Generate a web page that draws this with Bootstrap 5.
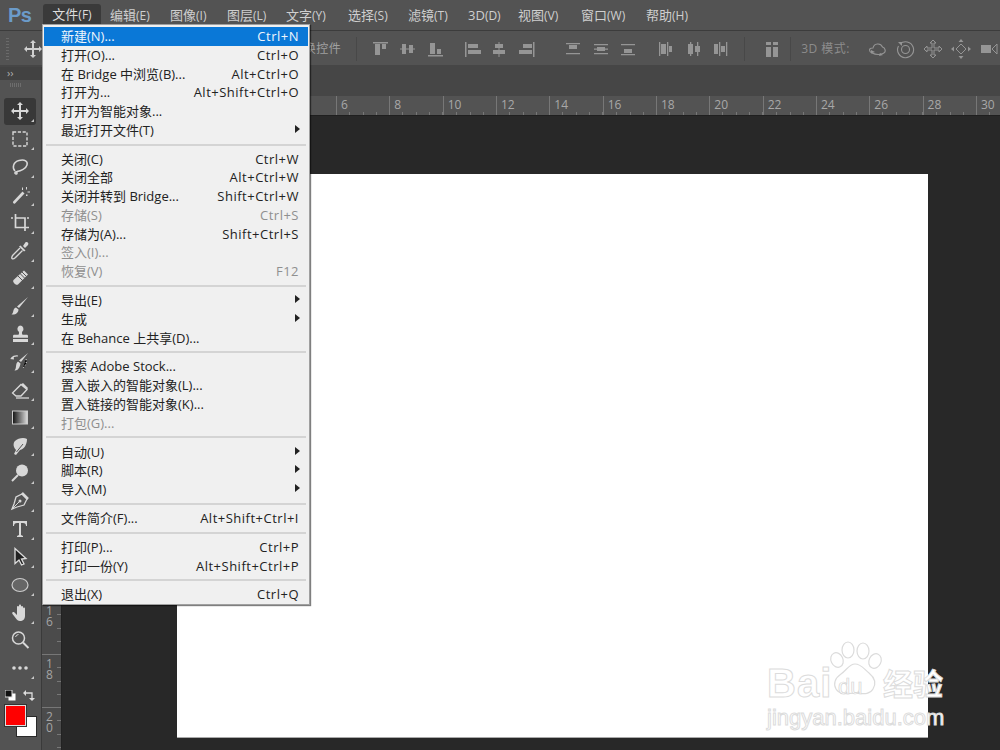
<!DOCTYPE html>
<html lang="zh-CN">
<head>
<meta charset="utf-8">
<title>Photoshop</title>
<link href="https://cdn.jsdelivr.net/npm/bootstrap@5.3.0/dist/css/bootstrap.min.css" rel="stylesheet">
<script src="https://cdn.jsdelivr.net/npm/bootstrap@5.3.0/dist/js/bootstrap.bundle.min.js"></script>
<style>
html,body{margin:0;height:100%;background:#282828;overflow:hidden}
body{font-family:"Open Sans","Noto Sans CJK SC",sans-serif;font-size:13px}
.app{width:1000px;height:750px;overflow:hidden;background:#282828}
.menubar{height:31px;background:#535353;border-bottom:1px solid #3c3c3c;color:#cfcfcf;font-size:13px;padding-left:8px;flex:none}
.logo{font:700 20px "Liberation Sans",sans-serif;color:#6b9bc9;width:35px;line-height:30px;letter-spacing:-.5px}
.mb{height:30px;line-height:30px;white-space:nowrap;width:60px;flex:none}
.mb small{font-size:12px}
.mb.on{background:#3a3a3a;border-radius:3px 3px 0 0;margin:4px 9px 0 0;height:21px;line-height:21px;width:58px;text-align:center;color:#ddd}
.optbar{height:36px;background:#535353;border-bottom:2px solid #464646;color:#a0a0a0;padding-top:2px;flex:none}
.optbar svg{width:20px;height:20px;flex:none;color:#959595}
.optbar svg.mv{color:#d0d0d0;margin-left:14px}
.grip{width:5px;height:22px;margin-left:6px;background:repeating-linear-gradient(#6a6a6a 0 1px,transparent 1px 3px)}
.vs{width:1px;height:24px;background:#484848;flex:none}
.optbar .t{white-space:nowrap;font-size:12px;letter-spacing:.5px}
.work{height:683px}
.tools{width:42px;background:#535353;border-right:1px solid #3a3a3a;flex:none}
.strip{height:13px;background:#424242;color:#b0b0b0;font-size:11px;line-height:11px;padding-left:7px;flex:none}
.tgrip{height:4px;width:12px;margin:3px 0 0 10px;background:repeating-linear-gradient(90deg,#6d6d6d 0 1px,transparent 1px 2px);flex:none}
.tool{position:relative;width:32px;height:27.85px;margin-left:4px;display:flex;align-items:center;justify-content:center;color:#d8d8d8;flex:none}
.tool svg{width:20px;height:20px}
.tool.on{background:#383838;border-radius:3px}
.tool.c::after{content:"";position:absolute;right:2px;bottom:3px;border-style:solid;border-width:0 0 3px 3px;border-color:transparent transparent #c8c8c8 transparent}
.swatches{height:52px;position:relative;margin-top:8px}
.bgc{position:absolute;left:16px;top:26px;width:21px;height:21px;background:#fff;border:1px solid #2a2a2a}
.fgc{position:absolute;left:5px;top:15px;width:21px;height:21px;background:#f00;border:1px solid #ddd;outline:1px solid #333}
.sm{position:absolute;left:5px;top:0;width:11px;height:11px}
.sw{position:absolute;left:23px;top:-1px;width:13px;height:13px;color:#ddd}
.main{min-width:0}
.tabbar{height:29px;background:#464646;flex:none}
.hruler{height:20px;background:#535353;border-bottom:1px solid #1f1f1f;flex:none;color:#a8a8a8;font:12px "Open Sans",sans-serif;padding-left:294px;overflow:hidden}
.htick{width:53.33px;flex:none;height:19px;padding-left:4px;line-height:18px;border-left:1px solid #777;
  background:repeating-linear-gradient(90deg,transparent 0 12.33px,#777 12.33px 13.33px) 0 100%/100% 3px no-repeat}
.vruler{width:20px;background:#4b4b4b;border-right:1px solid #222;flex:none;color:#a4a4a4;font:12px/11px "Open Sans",sans-serif;padding-top:484.7px}
.vtick{height:53.33px;border-top:1px solid #777;padding:3px 0 0 4px;width:100%;white-space:pre-line;flex:none;
  background:repeating-linear-gradient(transparent 0 12.33px,#777 12.33px 13.33px) 100% 0/4px 100% no-repeat}
.canvas{background:#282828;padding:58px 0 0 115px}
.doc{width:751px;height:564px;background:#fff;border-bottom:1px solid #aaa}
.menu{position:absolute;left:42px;top:24px;width:268px;height:581px;background:#f0f0f0;border:1px solid #a0a0a0;box-shadow:1px 1px 1px rgba(0,0,0,.5);padding:2px 1px 0;color:#222;z-index:5}
.mi{height:18.75px;line-height:18.75px;padding:0 9px 0 17px;display:flex;justify-content:space-between;white-space:nowrap;position:relative}
.mi span+span{letter-spacing:.5px}
.mi.act{background:#0a78d7;color:#eef5fc}
.mi.dis{color:#8f8f8f}
.mi.sub::after{content:"";position:absolute;right:8px;top:4px;border-style:solid;border-width:4px 0 4px 5px;border-color:transparent transparent transparent #222}
.sep{height:10.15px;position:relative}
.sep::after{content:"";position:absolute;left:2px;right:2px;top:4px;height:2px;background:#d4d4d4}
.wm{position:absolute;left:760px;top:640px;width:200px;height:95px;z-index:4;color:#fff}
.wm svg{position:absolute;left:66px;top:0;width:58px;height:62px}
.wm span{position:absolute;white-space:nowrap;-webkit-text-stroke:1px #dcdcdc;color:#fff;font-family:"Liberation Sans","Noto Sans CJK SC",sans-serif}
.wm .bai{left:7px;top:21px;font-size:40px;font-weight:700;line-height:44px;letter-spacing:1px}
.wm .du{left:78px;top:34px;font-size:22px;line-height:26px;-webkit-text-stroke:.7px #d4d4d4}
.wm .jy{left:123px;top:27px;font-size:30px;font-weight:700;line-height:36px}
.wm .url{left:7px;top:65px;font-size:22px;line-height:26px}
</style>
</head>
<body>
<svg width="0" height="0" class="position-absolute">
<defs>
<symbol id="move" viewBox="0 0 20 20"><path fill="currentColor" d="M10 1l3 3h-2v5h5V7l3 3-3 3v-2h-5v5h2l-3 3-3-3h2v-5H4v2l-3-3 3-3v2h5V4H7z"/></symbol>
<symbol id="marq" viewBox="0 0 20 20"><rect x="3" y="3" width="14" height="14" fill="none" stroke="currentColor" stroke-width="1.4" stroke-dasharray="3.2 1.6"/></symbol>
<symbol id="lasso" viewBox="0 0 20 20"><path fill="none" stroke="currentColor" stroke-width="1.5" d="M5 14C2 11 3 5 9 3.500s9 1 8 4.500-6 6-10 6.500c-2 .2-3 2-1 2.500 1 .3 1.500-1 .5-2"/></symbol>
<symbol id="wand" viewBox="0 0 20 20"><path fill="currentColor" d="M12.500 6.500l2 2L5 18.500c-1 .8-2.700-1-1.800-2z"/><path fill="currentColor" d="M16 2h1v2.500h-1zM12 2.500h1V5h-1zM17.500 6.500H20v1h-2.500zM16 9.500h1.500V11H16z"/></symbol>
<symbol id="crop" viewBox="0 0 20 20"><path fill="none" stroke="currentColor" stroke-width="1.700" d="M1 5h2M5.500 1v13.500H19M5.500 5H15v13M17 5h2"/></symbol>
<symbol id="drop" viewBox="0 0 20 20"><path fill="currentColor" d="M13 5l2 2 3-3c1.300-2-1-3.800-2.700-2.500z"/><path fill="currentColor" d="M10.500 4.500l5 5-1.500 1-5-5z"/><path fill="none" stroke="currentColor" stroke-width="1.400" d="M10 7L3 14c-1 1-1.500 3-1 3.500s2 .3 3.500-1L12.500 9.500"/></symbol>
<symbol id="heal" viewBox="0 0 20 20"><path fill="currentColor" d="M14 2.500l4 4L8 16.500c-2 1.500-6-2.500-4.500-4.500z"/><path stroke="#535353" stroke-width="1" d="M7 7l6 6M9.500 5l5 5M11.500 3.500l5 5"/></symbol>
<symbol id="brush" viewBox="0 0 20 20"><path fill="currentColor" d="M18 1L9 12l-2-1.500z"/><path fill="currentColor" d="M6 11.500l2.500 2C8.500 16.500 6 19 1.500 18.500c2.500-1.500 1-6 4.500-7z"/></symbol>
<symbol id="stamp" viewBox="0 0 20 20"><path fill="currentColor" d="M10 1.500a3.500 3.500 0 0 1 2.200 6.200c-.5 1-.2 2 .3 3H17c1 0 1 1 1 3H3c0-2 0-3 1-3h4.500c.5-1 .8-2 .3-3A3.500 3.500 0 0 1 10 1.500z"/><path fill="currentColor" d="M3 15h15v3H3z"/></symbol>
<symbol id="hist" viewBox="0 0 20 20"><path fill="currentColor" d="M18 1l-7 9-2-1.500z"/><path fill="currentColor" d="M8 9.500l2.500 2C10 15 8 19 4.500 18.500c2.500-2 .5-7 3.500-9z"/><path fill="none" stroke="currentColor" stroke-width="1.200" d="M8 4C5 3.500 3 4.500 1.500 6"/><path fill="currentColor" d="M0 7l3.500-2.500.5 3z"/><path stroke="currentColor" stroke-dasharray="1 2" d="M16 7c1 3 0 6-3 9"/></symbol>
<symbol id="eras" viewBox="0 0 20 20"><path fill="none" stroke="currentColor" stroke-width="1.300" d="M2.500 13L11 4.500l6 5-6 6.500H6z"/><path fill="currentColor" d="M11 4.500l2-1.500 5 5-1 1.500-6-5z"/><path stroke="currentColor" stroke-width="1.300" d="M6 18h13"/></symbol>
<symbol id="grad" viewBox="0 0 20 20"><defs><linearGradient id="gr"><stop offset="0" stop-color="#111"/><stop offset="1" stop-color="#ddd"/></linearGradient></defs><rect x="2.500" y="3" width="15" height="13" fill="url(#gr)" stroke="#ccc"/></symbol>
<symbol id="smudge" viewBox="0 0 20 20"><path fill="currentColor" d="M5 5c3-3 9-4 12-2 0 6-3 10-7 11l-4 5-2-1 2-4C3 11 3 7 5 5z"/><path stroke="#535353" stroke-width="1" fill="none" d="M6.500 16L13 8"/></symbol>
<symbol id="dodge" viewBox="0 0 20 20"><circle cx="12" cy="7.500" r="6" fill="currentColor"/><path stroke="currentColor" stroke-width="2" d="M8 12l-6 6"/></symbol>
<symbol id="pen" viewBox="0 0 20 20"><path fill="none" stroke="currentColor" stroke-width="1.300" d="M12 3l5 5-3 6-7 2-5 2 2-5 2-7z"/><path stroke="currentColor" d="M3 17l6-6"/><circle cx="10" cy="10" r="1.500" fill="currentColor"/><path stroke="currentColor" stroke-width="2.500" d="M12 2l6 6"/></symbol>
<symbol id="ttxt" viewBox="0 0 20 20"><path fill="currentColor" d="M3 2h14v5h-1c0-2-1-3-3-3h-2v12l2 1v1H7v-1l2-1V4H7C5 4 4 5 4 7H3z"/></symbol>
<symbol id="arrow" viewBox="0 0 20 20"><path fill="#222" stroke="#ddd" stroke-width="1.300" d="M5 1.500l11 10-4.500.5 2.500 5-2.500 1-2.500-5-4 3.500z"/></symbol>
<symbol id="ellip" viewBox="0 0 20 20"><ellipse cx="10" cy="10" rx="8" ry="6.500" fill="#666" stroke="#ccc" stroke-width="1.200"/></symbol>
<symbol id="hand" viewBox="0 0 20 20"><path fill="currentColor" d="M7 4c0-1.500 2-1.500 2 0V2.500c0-1.500 2-1.500 2 0V4c0-1.500 2-1.500 2 0v1.500c0-1.500 2-1.500 2 0V13c0 3-2 5-5 5-2 0-3-1-4-2.500L2.500 11C1.500 9.500 3 8.500 4.500 9.500L7 12z"/></symbol>
<symbol id="zoom" viewBox="0 0 20 20"><circle cx="8.500" cy="8" r="6" fill="none" stroke="currentColor" stroke-width="1.500"/><path stroke="currentColor" stroke-width="2" d="M13 12.500l5.500 5.500"/><path fill="none" stroke="currentColor" d="M5.500 7a3.500 3.500 0 0 1 3-2.500"/></symbol>
<symbol id="more" viewBox="0 0 20 20"><circle cx="4" cy="10" r="1.800" fill="currentColor"/><circle cx="10" cy="10" r="1.800" fill="currentColor"/><circle cx="16" cy="10" r="1.800" fill="currentColor"/></symbol>
<symbol id="a1" viewBox="0 0 20 20"><path fill="currentColor" d="M3 3h15v1.500H3zM5 5h5v11H5zM12 5h4v5h-4z"/></symbol>
<symbol id="a2" viewBox="0 0 20 20"><path fill="currentColor" d="M5 5h4v10H5zM12 6h4v8h-4zM3 9.500h15v1H3z"/></symbol>
<symbol id="a3" viewBox="0 0 20 20"><path fill="currentColor" d="M3 16h15v1.500H3zM5 4h5v11H5zM12 10h4v5h-4z"/></symbol>
<symbol id="a4" viewBox="0 0 20 20"><path fill="currentColor" d="M3 3h1.500v15H3zM6 5h10v4H6zM6 11h13v4H6z"/></symbol>
<symbol id="a5" viewBox="0 0 20 20"><path fill="currentColor" d="M9.500 3h1v15h-1zM6 5h8v4H6zM4 11h12v4H4z"/></symbol>
<symbol id="a6" viewBox="0 0 20 20"><path fill="currentColor" d="M16 3h1.500v15H16zM6 5h9v4H6zM2 11h13v4H2z"/></symbol>
<symbol id="d1" viewBox="0 0 20 20"><path fill="currentColor" d="M3 4h14v1.300H3zM6 6h8v4H6zM3 14h14v1.300H3z"/></symbol>
<symbol id="d2" viewBox="0 0 20 20"><path fill="currentColor" d="M3 5h14v1.300H3zM6 8h8v4H6zM3 9.500h14v1.300H3zM3 14h14v1.300H3z"/></symbol>
<symbol id="d3" viewBox="0 0 20 20"><path fill="currentColor" d="M3 5h14v1.300H3zM6 10h8v4H6zM3 15h14v1.300H3z"/></symbol>
<symbol id="h1" viewBox="0 0 20 20"><path fill="currentColor" d="M4 3h1.300v14H4zM6 5h5v10H6zM12 3h1.300v14H12zM14 7h3v6h-3z"/></symbol>
<symbol id="h2" viewBox="0 0 20 20"><path fill="currentColor" d="M5 5h5v10H5zM7 3h1.300v14H7zM12 7h5v6h-5zM14 3h1.300v14H14z"/></symbol>
<symbol id="h3" viewBox="0 0 20 20"><path fill="currentColor" d="M8 3h1.300v14H8zM3 5h4v10H3zM10 7h4v6h-4zM15 3h1.300v14H15z"/></symbol>
<symbol id="dist" viewBox="0 0 20 20"><path fill="currentColor" d="M4 3h5v3H4zM11 3h5v3h-5zM4 8h5v10H4zM11 8h5v10h-5z"/></symbol>
<symbol id="o1" viewBox="0 0 20 20"><path fill="none" stroke="currentColor" stroke-width="1.100" d="M6 9a5 5 0 0 1 9.500-1c3 1 4 5 .5 6.500-3 1.300-8 1-11-.5S1 9 6 9z"/><path fill="currentColor" d="M4 11l4 2-4 1.500zM13 14l3 2-4 1z"/></symbol>
<symbol id="o2" viewBox="0 0 20 20"><path fill="none" stroke="currentColor" stroke-width="1.100" d="M5 5a8 8 0 1 1-1.500 2"/><circle cx="10.500" cy="10.500" r="4" fill="none" stroke="currentColor" stroke-width="1.100"/><path fill="currentColor" d="M3 3h4v4z"/></symbol>
<symbol id="o3" viewBox="0 0 20 20"><path fill="none" stroke="currentColor" d="M10 1l3 3h-2v5h5V7l3 3-3 3v-2h-5v5h2l-3 3-3-3h2v-5H4v2l-3-3 3-3v2h5V4H7z"/></symbol>
<symbol id="o4" viewBox="0 0 20 20"><path fill="currentColor" d="M10 0l2.500 3h-5zM10 20l-2.500-3h5zM0 10l3-2.500v5zM20 10l-3 2.500v-5z"/><path fill="none" stroke="currentColor" d="M10 5l5 5-5 5-5-5z"/></symbol>
<symbol id="o5" viewBox="0 0 20 20"><path fill="currentColor" d="M1 6h10v8H1z"/><path fill="none" stroke="currentColor" d="M12 10l5-5v10z"/></symbol>
</defs>
</svg>

<div class="app position-relative d-flex flex-column">
  <div class="menubar d-flex align-items-start">
    <div class="logo">Ps</div>
    <div class="mb on">文件<small>(F)</small></div>
    <div class="mb">编辑<small>(E)</small></div>
    <div class="mb" style="width:57px">图像<small>(I)</small></div>
    <div class="mb" style="width:59px">图层<small>(L)</small></div>
    <div class="mb" style="width:62px">文字<small>(Y)</small></div>
    <div class="mb">选择<small>(S)</small></div>
    <div class="mb">滤镜<small>(T)</small></div>
    <div class="mb" style="width:50px">3D<small>(D)</small></div>
    <div class="mb" style="width:63px">视图<small>(V)</small></div>
    <div class="mb" style="width:65px">窗口<small>(W)</small></div>
    <div class="mb">帮助<small>(H)</small></div>
  </div>

  <div class="optbar d-flex align-items-center">
    <div class="grip"></div>
    <svg class="mv"><use href="#move"/></svg>
    <div class="t" style="margin-left:261px">换控件</div>
    <div class="vs" style="margin-left:15px"></div>
    <svg style="margin-left:13px"><use href="#a1"/></svg>
    <svg style="margin-left:7px"><use href="#a2"/></svg>
    <svg style="margin-left:8px"><use href="#a3"/></svg>
    <svg style="margin-left:17px"><use href="#a4"/></svg>
    <svg style="margin-left:7px"><use href="#a5"/></svg>
    <svg style="margin-left:8px"><use href="#a6"/></svg>
    <svg style="margin-left:26px"><use href="#d1"/></svg>
    <svg style="margin-left:8px"><use href="#d2"/></svg>
    <svg style="margin-left:7px"><use href="#d3"/></svg>
    <svg style="margin-left:17px"><use href="#h1"/></svg>
    <svg style="margin-left:8px"><use href="#h2"/></svg>
    <svg style="margin-left:8px"><use href="#h3"/></svg>
    <div class="vs" style="margin-left:13px"></div>
    <svg style="margin-left:17px"><use href="#dist"/></svg>
    <div class="vs" style="margin-left:8px"></div>
    <div class="t" style="margin-left:10px;color:#8c8c8c">3D 模式:</div>
    <svg style="margin-left:17px"><use href="#o1"/></svg>
    <svg style="margin-left:8px"><use href="#o2"/></svg>
    <svg style="margin-left:8px"><use href="#o3"/></svg>
    <svg style="margin-left:8px"><use href="#o4"/></svg>
    <svg style="margin-left:9px"><use href="#o5"/></svg>
  </div>

  <div class="work d-flex">
    <div class="tools d-flex flex-column">
      <div class="strip">››</div>
      <div class="tgrip"></div>
      <div style="height:10.5px" class="flex-shrink-0"></div>
      <div class="tool on c"><svg><use href="#move"/></svg></div>
      <div class="tool c"><svg><use href="#marq"/></svg></div>
      <div class="tool c"><svg><use href="#lasso"/></svg></div>
      <div class="tool c"><svg><use href="#wand"/></svg></div>
      <div class="tool c"><svg><use href="#crop"/></svg></div>
      <div class="tool c"><svg><use href="#drop"/></svg></div>
      <div class="tool c"><svg><use href="#heal"/></svg></div>
      <div class="tool c"><svg><use href="#brush"/></svg></div>
      <div class="tool c"><svg><use href="#stamp"/></svg></div>
      <div class="tool c"><svg><use href="#hist"/></svg></div>
      <div class="tool c"><svg><use href="#eras"/></svg></div>
      <div class="tool c"><svg><use href="#grad"/></svg></div>
      <div class="tool c"><svg><use href="#smudge"/></svg></div>
      <div class="tool c"><svg><use href="#dodge"/></svg></div>
      <div class="tool c"><svg><use href="#pen"/></svg></div>
      <div class="tool c"><svg><use href="#ttxt"/></svg></div>
      <div class="tool c"><svg><use href="#arrow"/></svg></div>
      <div class="tool c"><svg><use href="#ellip"/></svg></div>
      <div class="tool c"><svg><use href="#hand"/></svg></div>
      <div class="tool"><svg><use href="#zoom"/></svg></div>
      <div class="tool c"><svg><use href="#more"/></svg></div>
      <div class="swatches flex-shrink-0">
        <svg class="sm" viewBox="0 0 11 11"><rect x="3.500" y="3.500" width="7" height="7" fill="#fff"/><rect x="0" y="0" width="7" height="7" fill="#111" stroke="#ddd"/></svg>
        <svg class="sw" viewBox="0 0 13 13"><path fill="none" stroke="currentColor" stroke-width="1.300" d="M1 4h8v7"/><path fill="currentColor" d="M3 1v6L0 4zM6 9h6l-3 3z"/></svg>
        <div class="bgc"></div>
        <div class="fgc"></div>
      </div>
    </div>

    <div class="main flex-grow-1 d-flex flex-column">
      <div class="tabbar"></div>
      <div class="hruler d-flex">
        <div class="htick">6</div><div class="htick">8</div><div class="htick">10</div><div class="htick">12</div><div class="htick">14</div><div class="htick">16</div>
        <div class="htick">18</div><div class="htick">20</div><div class="htick">22</div><div class="htick">24</div><div class="htick">26</div><div class="htick">28</div><div class="htick">30</div>
      </div>
      <div class="d-flex flex-grow-1" style="min-height:0">
        <div class="vruler d-flex flex-column">
          <div class="vtick">1
6</div>
          <div class="vtick">1
8</div>
          <div class="vtick">2
0</div>
        </div>
        <div class="canvas flex-grow-1"><div class="doc"></div></div>
      </div>
    </div>
  </div>

  <div class="menu">
    <div class="mi act"><span>新建(N)...</span><span>Ctrl+N</span></div>
    <div class="mi"><span>打开(O)...</span><span>Ctrl+O</span></div>
    <div class="mi"><span>在 Bridge 中浏览(B)...</span><span>Alt+Ctrl+O</span></div>
    <div class="mi"><span>打开为...</span><span>Alt+Shift+Ctrl+O</span></div>
    <div class="mi"><span>打开为智能对象...</span></div>
    <div class="mi sub"><span>最近打开文件(T)</span></div>
    <div class="sep"></div>
    <div class="mi"><span>关闭(C)</span><span>Ctrl+W</span></div>
    <div class="mi"><span>关闭全部</span><span>Alt+Ctrl+W</span></div>
    <div class="mi"><span>关闭并转到 Bridge...</span><span>Shift+Ctrl+W</span></div>
    <div class="mi dis"><span>存储(S)</span><span>Ctrl+S</span></div>
    <div class="mi"><span>存储为(A)...</span><span>Shift+Ctrl+S</span></div>
    <div class="mi dis"><span>签入(I)...</span></div>
    <div class="mi dis"><span>恢复(V)</span><span>F12</span></div>
    <div class="sep"></div>
    <div class="mi sub"><span>导出(E)</span></div>
    <div class="mi sub"><span>生成</span></div>
    <div class="mi"><span>在 Behance 上共享(D)...</span></div>
    <div class="sep"></div>
    <div class="mi"><span>搜索 Adobe Stock...</span></div>
    <div class="mi"><span>置入嵌入的智能对象(L)...</span></div>
    <div class="mi"><span>置入链接的智能对象(K)...</span></div>
    <div class="mi dis"><span>打包(G)...</span></div>
    <div class="sep"></div>
    <div class="mi sub"><span>自动(U)</span></div>
    <div class="mi sub"><span>脚本(R)</span></div>
    <div class="mi sub"><span>导入(M)</span></div>
    <div class="sep"></div>
    <div class="mi"><span>文件简介(F)...</span><span>Alt+Shift+Ctrl+I</span></div>
    <div class="sep"></div>
    <div class="mi"><span>打印(P)...</span><span>Ctrl+P</span></div>
    <div class="mi"><span>打印一份(Y)</span><span>Alt+Shift+Ctrl+P</span></div>
    <div class="sep"></div>
    <div class="mi"><span>退出(X)</span><span>Ctrl+Q</span></div>
  </div>

  <div class="wm">
    <svg viewBox="0 0 58 62" fill="#fff" stroke="#dcdcdc" stroke-width="1.200">
      <ellipse cx="11" cy="20" rx="6" ry="7.500" transform="rotate(-25 11 20)"/>
      <ellipse cx="22" cy="10" rx="6" ry="8"/>
      <ellipse cx="37" cy="11" rx="6" ry="8"/>
      <ellipse cx="49" cy="21" rx="6" ry="7.500" transform="rotate(25 49 21)"/>
      <path d="M29 24c6 0 9 5 14 9 6 5 7 11 4 16-4 7-12 4-18 4s-15 3-19-4c-3-5-1-11 5-15 6-4 8-10 14-10z"/>
    </svg>
    <span class="bai">Bai</span>
    <span class="du">du</span>
    <span class="jy">经验</span>
    <span class="url">jingyan.baidu.com</span>
  </div>
</div>
</body>
</html>
